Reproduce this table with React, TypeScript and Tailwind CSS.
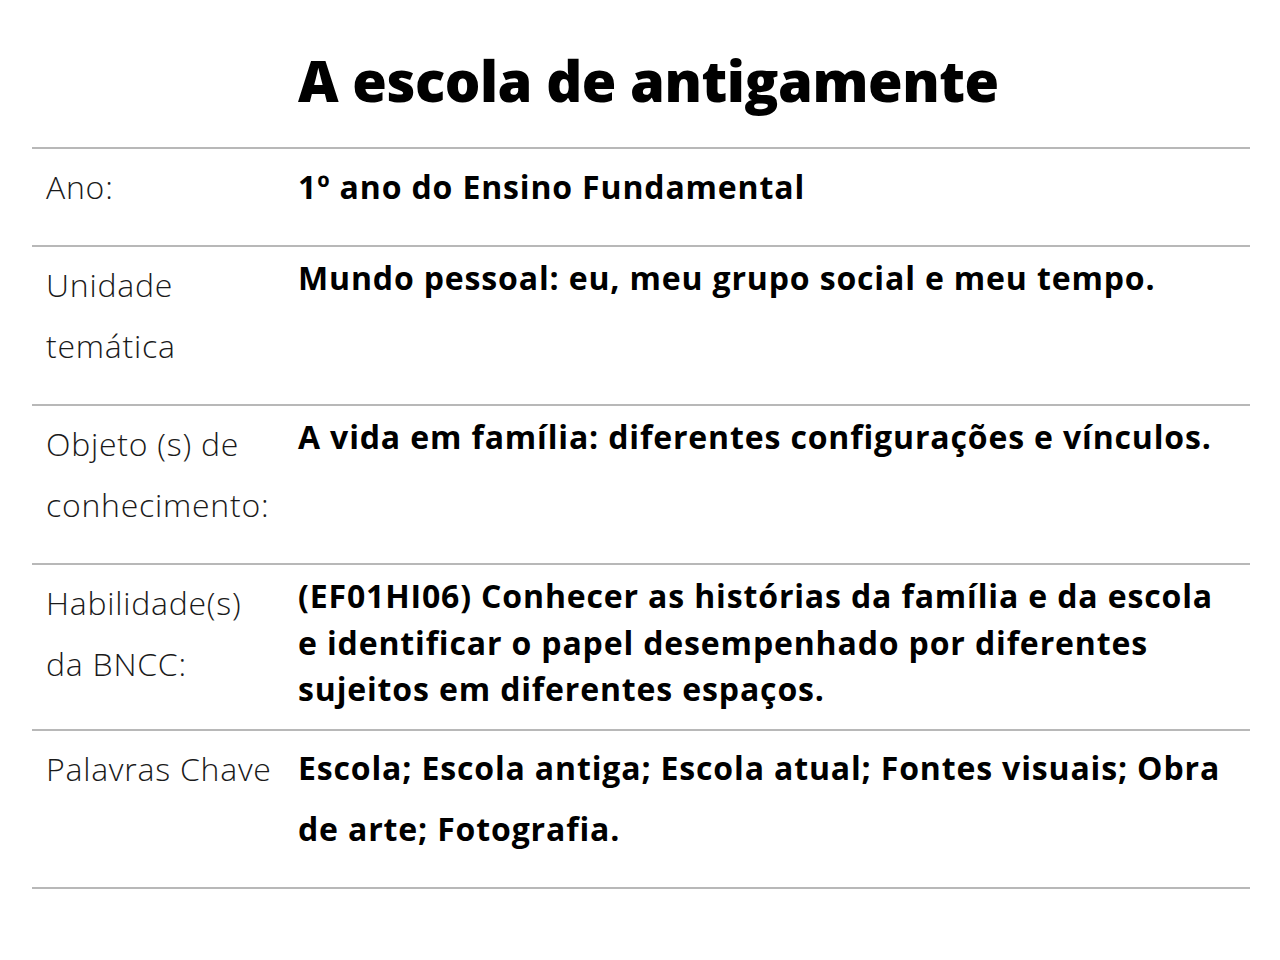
const rows = [
  { label: "Ano:", value: "1º ano do Ensino Fundamental", cls: "pt-[7px] leading-[61px]" },
  { label: "Unidade temática", value: "Mundo pessoal: eu, meu grupo social e meu tempo.", cls: "pt-[8px] pb-[16px] leading-[46.5px]" },
  { label: "Objeto (s) de conhecimento:", value: "A vida em família: diferentes configurações e vínculos.", cls: "pt-[8px] pb-[16px] leading-[46.5px]" },
  {
    label: "Habilidade(s) da BNCC:",
    value:
      "(EF01HI06) Conhecer as histórias da família e da escola e identificar o papel desempenhado por diferentes sujeitos em diferentes espaços.",
    cls: "pt-[8px] pb-[16px] leading-[46.5px]",
  },
  {
    label: "Palavras Chave",
    value: "Escola; Escola antiga; Escola atual; Fontes visuais; Obra de arte; Fotografia.",
    cls: "pt-[6px] pb-[28px] leading-[61px]",
  },
];

export default function App() {
  return (
    <div className="min-h-[960px] w-full bg-white font-['Open_Sans',sans-serif] text-black">
      <div className="ml-[32px] w-[1218px]">
        <h1 className="pl-[266px] pt-[40px] pb-[27px] text-[56px] font-extrabold leading-[80px] tracking-[-0.45px]">
          A escola de antigamente
        </h1>
        <div className="border-t-2 border-[#b8b8b8]">
          {rows.map((r) => (
            <div key={r.label} className="flex border-b-2 border-[#b8b8b8]">
              <div className="w-[266px] shrink-0 pl-[14px] pr-[18px] pt-[7px] pb-[28px] text-[32px] font-light leading-[61px] tracking-[0.75px] text-[#1a1a1a]">
                {r.label}
              </div>
              <div className={`flex-1 pr-[14px] text-[32px] font-bold tracking-[0.85px] ${r.cls}`}>{r.value}</div>
            </div>
          ))}
        </div>
      </div>
    </div>
  );
}
